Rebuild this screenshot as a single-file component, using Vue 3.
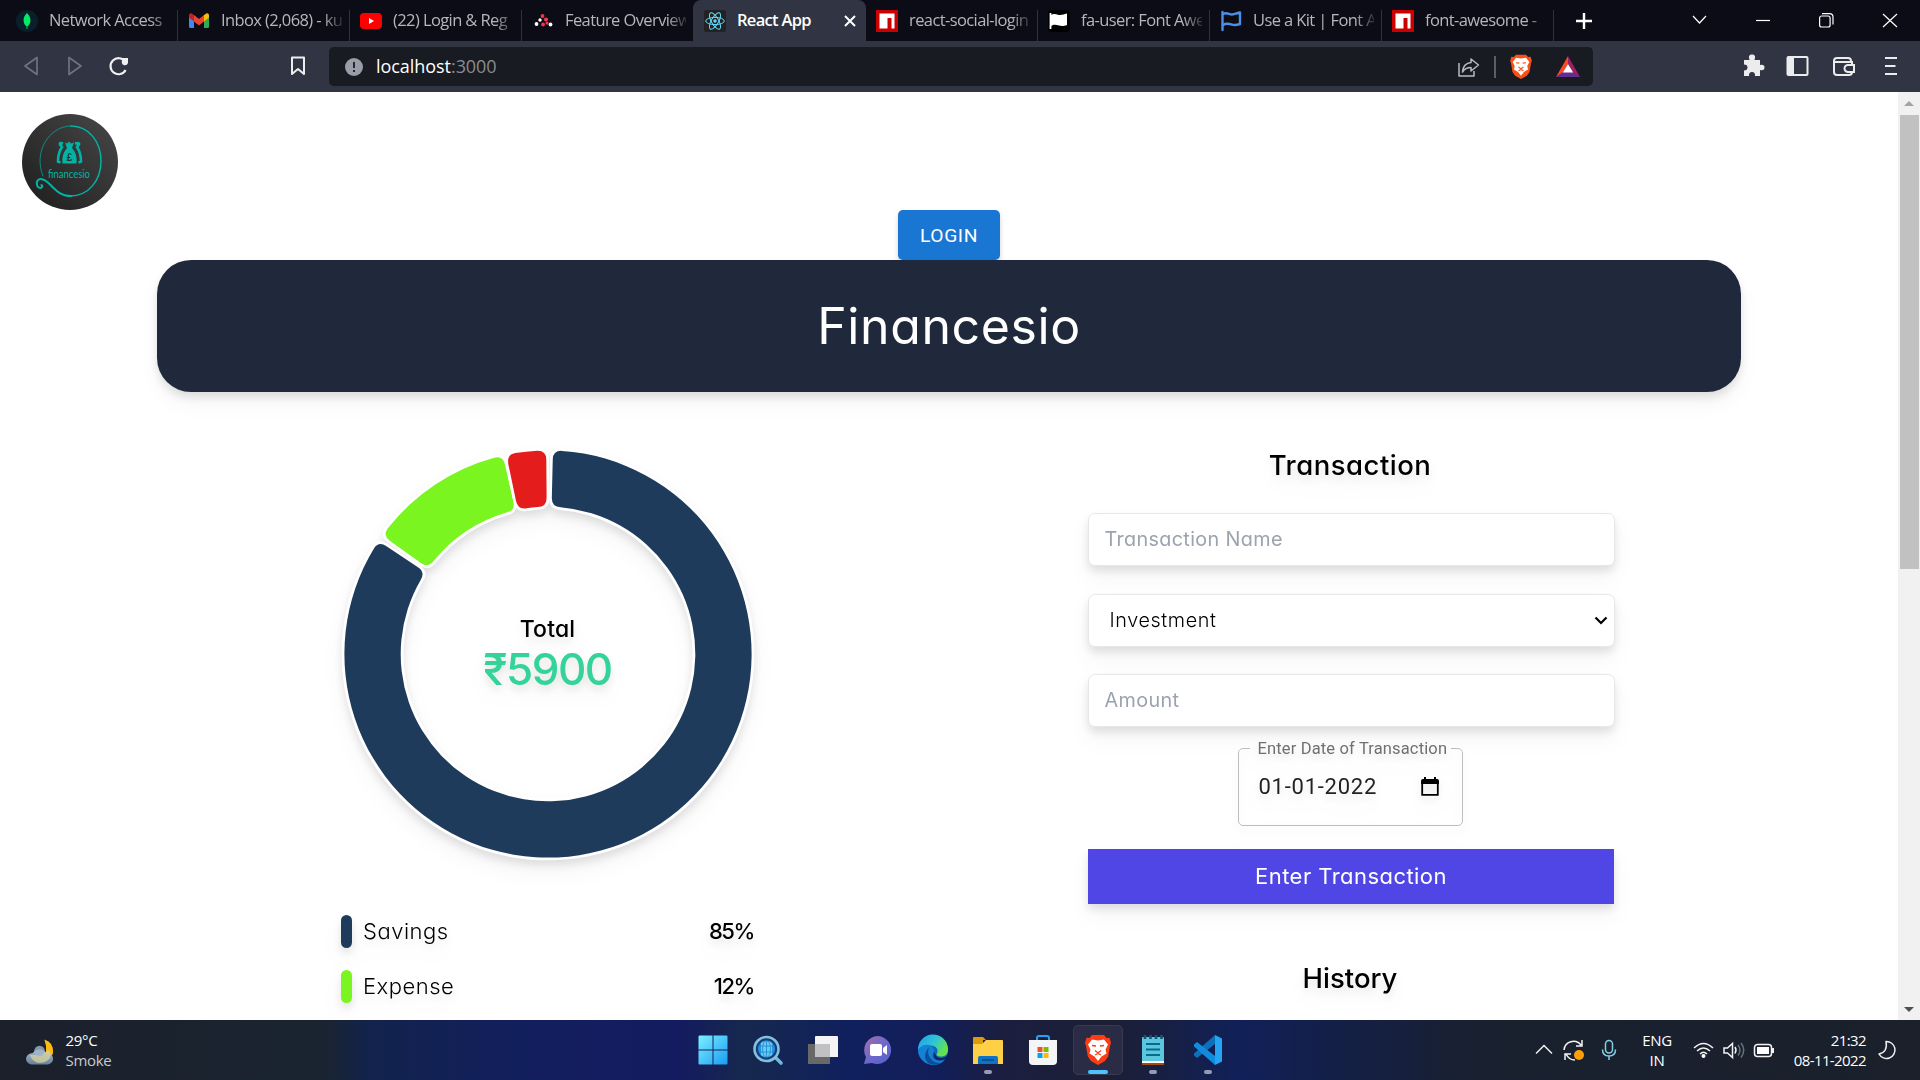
<script setup>
const tabs = [
  { id: 'mongo', title: 'Network Access' },
  { id: 'gmail', title: 'Inbox (2,068) - ku' },
  { id: 'youtube', title: '(22) Login & Reg' },
  { id: 'feature', title: 'Feature Overview' },
  { id: 'react', title: 'React App', active: true },
  { id: 'npm', title: 'react-social-login' },
  { id: 'flag', title: 'fa-user: Font Awe' },
  { id: 'kit', title: 'Use a Kit | Font A' },
  { id: 'npm', title: 'font-awesome -' },
]

const legend = [
  { label: 'Savings', value: '85%', color: '#1f3b5c' },
  { label: 'Expense', value: '12%', color: '#7af520' },
]

const CENTER = 220
const point = (radius, deg) => {
  const a = (deg * Math.PI) / 180
  return `${(CENTER + radius * Math.sin(a)).toFixed(2)} ${(CENTER - radius * Math.cos(a)).toFixed(2)}`
}

// Ring segment with rounded corners, angles clockwise from twelve o'clock
function segment(from, to) {
  const R = 203.6
  const r = 147.3
  const c = 9
  const o = (c / R) * (180 / Math.PI)
  const i = (c / r) * (180 / Math.PI)
  const large = to - from > 180 ? 1 : 0
  return [
    `M${point(R, from + o)}`,
    `A${R} ${R} 0 ${large} 1 ${point(R, to - o)}`,
    `Q${point(R, to)} ${point(R - c, to)}`,
    `L${point(r + c, to)}`,
    `Q${point(r, to)} ${point(r, to - i)}`,
    `A${r} ${r} 0 ${large} 0 ${point(r, from + i)}`,
    `Q${point(r, from)} ${point(r + c, from)}`,
    `L${point(R - c, from)}`,
    `Q${point(R, from)} ${point(R, from + o)}Z`,
  ].join('')
}

const segments = [
  { color: '#1f3b5c', d: segment(1.4, 303.7) },
  { color: '#7af520', d: segment(305.6, 347.2) },
  { color: '#e51c1c', d: segment(348.2, 359.5) },
]
</script>

<template>
  <div class="screen">
    <header class="tabbar">
      <div v-for="(tab, n) in tabs" :key="n" class="tab" :class="{ active: tab.active, edge: n === 3 }">
        <svg class="favicon" viewBox="0 0 22 22">
          <template v-if="tab.id === 'mongo'">
            <circle cx="11" cy="11" r="11" fill="#0a1f2b" />
            <path d="M11 3c2.600 2.500 3.600 5 3.400 8-.2 2.500-1.400 4.300-3 5.500V19h-.8v-2.500C9 15.300 7.800 13.500 7.600 11 7.400 8 8.400 5.500 11 3z" fill="#00ed64" />
          </template>
          <template v-else-if="tab.id === 'gmail'">
            <path d="M1 6v10.500q0 1.500 1.500 1.500H6V9.500z" fill="#4285f4" />
            <path d="M21 6v10.500q0 1.500-1.500 1.500H16V9.500z" fill="#34a853" />
            <path d="M16 5l2-1.300c1.600-1 3 .2 3 1.800v2L16 11.500z" fill="#fbbc04" />
            <path d="M6 5L4 3.700C2.400 2.700 1 3.900 1 5.500v2l5 4z" fill="#c5221f" />
            <path d="M6 5l5 4 5-4v6.500l-5 4-5-4z" fill="#ea4335" />
          </template>
          <template v-else-if="tab.id === 'youtube'">
            <rect x="0" y="3" width="22" height="16" rx="4" fill="#f00" />
            <path d="M9 8l5 3-5 3z" fill="#fff" />
          </template>
          <template v-else-if="tab.id === 'feature'">
            <g fill="#fff"><circle cx="4.500" cy="14" r="1.900" /><circle cx="8" cy="10" r="1.700" /><circle cx="18.500" cy="14.500" r="1.900" /></g>
            <g fill="#f0364f"><circle cx="10.500" cy="6" r="1.900" /><circle cx="14" cy="9.500" r="2.100" /><circle cx="11" cy="14.500" r="1.900" /><circle cx="15" cy="13" r="1.600" /></g>
          </template>
          <template v-else-if="tab.id === 'react'">
            <rect width="22" height="22" rx="2" fill="#222" />
            <g fill="none" stroke="#61dafb" stroke-width="1">
              <ellipse cx="11" cy="11" rx="9.300" ry="3.600" />
              <ellipse cx="11" cy="11" rx="9.300" ry="3.600" transform="rotate(60 11 11)" />
              <ellipse cx="11" cy="11" rx="9.300" ry="3.600" transform="rotate(120 11 11)" />
            </g>
            <circle cx="11" cy="11" r="1.700" fill="#61dafb" />
          </template>
          <template v-else-if="tab.id === 'npm'">
            <rect width="22" height="22" fill="#cb0000" />
            <path d="M3.500 3.500h15v15h-3V8H11.500v10.500h-8z" fill="#fff" />
          </template>
          <template v-else-if="tab.id === 'flag'">
            <rect width="22" height="22" rx="4" fill="#000" />
            <path d="M2.500 3v16" stroke="#fff" stroke-width="1.800" />
            <path d="M3 5c4-2.500 6 0 9 0s4-.8 7-1.500V15c-3 1-5 1.500-8 .6S6 14 3 16z" fill="#fff" />
          </template>
          <template v-else>
            <g fill="none" stroke="#4c8fe6" stroke-width="2.400" stroke-linecap="round" stroke-linejoin="round">
              <path d="M2.500 2v18" /><path d="M3 4c4-2 6 .5 9 .5S17 3 20 2.500V14c-3 1-5 1.500-8 .6S6 13 3 15" />
            </g>
          </template>
        </svg>
        <span class="tab-title">{{ tab.title }}</span>
        <svg v-if="tab.active" class="tab-close" viewBox="0 0 12 12"><path d="M1 1l10 10M11 1L1 11" stroke="#fff" stroke-width="2" /></svg>
      </div>
      <svg class="tab-plus" viewBox="0 0 16 16"><path d="M8 0v16M0 8h16" stroke="#fff" stroke-width="2.400" /></svg>
      <svg class="window-controls" viewBox="0 0 206 18" fill="none" stroke="#fff" stroke-width="1.200">
        <path d="M1 5l6.500 7L14 5" /><path d="M64 9.500h14" />
        <rect x="127.600" y="5" width="10.500" height="11" rx="2" /><path d="M130 2.600h7.500q3.500 0 3.500 3.500v7.500" />
        <path d="M191 3l14 13M205 3l-14 13" />
      </svg>
    </header>

    <nav class="toolbar">
      <svg class="nav-icons" viewBox="0 0 110 24" fill="none" stroke-width="1.700" stroke-linejoin="round">
        <path d="M14 3.500v17L2 12z" stroke="#6f7280" /><path d="M46 3.500v17L58 12z" stroke="#6f7280" />
        <path d="M102 7.500a8 8 0 1 0 .6 8.500" stroke="#f0f0f2" stroke-width="2.200" /><path d="M99 4h6v5q-1 3-4.500 2-2.500-1.500-1.500-5z" fill="#f0f0f2" />
      </svg>
      <svg class="bookmark" viewBox="0 0 16 20"><path d="M2 1.500h12V18l-6-5-6 5z" fill="none" stroke="#eee" stroke-width="2" stroke-linejoin="round" /></svg>
      <div class="address">
        <svg class="info" viewBox="0 0 18 18"><circle cx="9" cy="9" r="9" fill="#9a9da8" /><path d="M9 4v6M9 12v2" stroke="#181b22" stroke-width="1.800" /></svg>
        <span class="url">localhost<i>:3000</i></span>
        <svg class="share" viewBox="0 0 22 20" fill="none" stroke="#b9bac0" stroke-width="1.500" stroke-linejoin="round">
          <path d="M1 6v13h15v-5" /><path d="M13 2l7.500 6-7.500 6v-3.500c-4 0-6.500 1.300-8.500 4.500.5-5.500 3.500-9 8.500-9.500z" />
        </svg>
        <span class="divider"></span>
        <svg class="lion" viewBox="0 0 26 30">
          <path d="M7 1h12l2.500 2.500 3-.2L26 8l-1 3-1.800 10.500L20 26l-7 4-7-4-3.200-4.500L1 11 0 8l1.500-4.700 3 .2z" fill="#fb5014" />
          <path d="M7 4.500l6 1 6-1 4 5-2.500 5 1 4-5 3L13 26l-3.500-4.500-5-3 1-4L3 9.500z" fill="#fff" />
          <path d="M7 10.500l4 .5M19 10.500l-4 .5M10 15.500l3 2.500 3-2.500M10 20l3-1.500 3 1.500" fill="none" stroke="#fb5014" stroke-width="1.400" />
        </svg>
        <svg class="bat" viewBox="0 0 24 21">
          <path d="M12 0v8l-5 8.500L0 21z" fill="#ff4724" /><path d="M12 0v8l5 8.500 7 4.500z" fill="#9e1f63" />
          <path d="M0 21l7-5h10l7 5z" fill="#662d91" /><path d="M12 8l5.200 8.500H6.800z" fill="#fff" />
        </svg>
      </div>
      <svg class="tools" viewBox="0 0 156 24">
        <path d="M2 6h5.500q-2-5.500 2.500-5.500T12.500 6H18v5q4.500-1 4.500 2.500T18 16v6h-5q.3-4-3-4t-3 4H2v-5.500q3.500 0 3.500-3T2 10.500z" fill="#ececee" />
        <rect x="45.500" y="3" width="20" height="18" rx="1" fill="none" stroke="#ececee" stroke-width="2" /><path d="M46 3h6v18h-6z" fill="#ececee" />
        <g fill="none" stroke="#ececee" stroke-width="2"><path d="M109 9V7q0-3-3-3H95q-3 0-3 3v11q0 3 3 3h12q3 0 3-3V8H93" /><path d="M112 11h-6a3.500 3.500 0 0 0 0 7h6z" fill="#313442" /></g>
        <path d="M143 4h12M143 12h10.500M143 20h12" stroke="#ececee" stroke-width="2" />
      </svg>
    </nav>

    <main class="page">
      <div class="content">
        <svg class="logo" viewBox="0 0 96 96">
          <defs>
            <linearGradient id="disc" x1="0" y1="1" x2="1" y2="0"><stop offset="0" stop-color="#1d1d1d" /><stop offset="1" stop-color="#484848" /></linearGradient>
          </defs>
          <circle cx="48" cy="48" r="48" fill="url(#disc)" />
          <g fill="none" stroke="#00b3a4" stroke-linecap="round">
            <path d="M21 62C11 38 27 12 49 12" stroke-width=".7" /><path d="M49 12c18 0 30 16 30 35S67 82 48 82" stroke-width="1.500" />
            <path d="M49 82C32 82 28 65 19 65c-6 0-5 9-.5 9q3-1 1-3" stroke-width="2.100" />
          </g>
          <path d="M43 28.500l2 1 2-2 2 2 3-1-2 5.500q6 7 4.500 15.500H40.500Q39 41 45 34z" fill="#00b3a4" />
          <path d="M41 29.500q-4-1-3 1l2 2.500q-4 6-4 14.500l2.500 1M53 29.500q5-1 4 1l-2 2.500q4 6 4 14.500l-2.500 1" fill="none" stroke="#00b3a4" stroke-width="2.600" />
          <text x="47.500" y="46.500" text-anchor="middle" font-family="Liberation Sans" font-weight="700" font-size="10" fill="#293332">£</text>
          <text x="26" y="64" font-family="Lato" font-size="12" textLength="42" lengthAdjust="spacingAndGlyphs" fill="#00b3a4">financesio</text>
        </svg>
        <button class="login">LOGIN</button>
        <h1 class="banner">Financesio</h1>
        <div class="columns">
          <section class="summary">
            <div class="chart">
              <svg viewBox="0 0 440 440">
                <path v-for="s in segments" :key="s.color" :d="s.d" :fill="s.color" stroke="#fff" stroke-width="5.500" stroke-linejoin="round" paint-order="stroke" />
              </svg>
              <div class="total">
                <h3>Total</h3>
                <span>₹5900</span>
              </div>
            </div>
            <ul class="legend">
              <li v-for="item in legend" :key="item.label">
                <span class="swatch" :style="{ background: item.color }"></span>
                <span class="name">{{ item.label }}</span>
                <b>{{ item.value }}</b>
              </li>
            </ul>
          </section>

          <section class="form">
            <h2 class="heading">Transaction</h2>
            <div class="field placeholder name-field">Transaction Name</div>
            <div class="field select">
              <span>Investment</span>
              <svg viewBox="0 0 14 9"><path d="M1.500 1.500L7 7l5.500-5.500" fill="none" stroke="#000" stroke-width="2.200" /></svg>
            </div>
            <div class="field placeholder">Amount</div>
            <fieldset class="date">
              <legend>Enter Date of Transaction</legend>
              <div class="date-row">
                <span>01-01-2022</span>
                <svg viewBox="0 0 18 20"><path d="M1.200 5v12.800h15.600V5" fill="none" stroke="#000" stroke-width="1.800" /><path d="M2 2h1V0h2v2h8V0h2v2h1q2 0 2 2v3H0V4q0-2 2-2z" /></svg>
              </div>
            </fieldset>
            <button class="submit">Enter Transaction</button>
            <h2 class="heading history">History</h2>
          </section>
        </div>
      </div>
      <aside class="scrollbar">
        <i class="up"></i><span class="thumb"></span><i class="down"></i>
      </aside>
    </main>

    <footer class="taskbar">
      <div class="weather">
        <svg viewBox="0 0 30 27">
          <defs><linearGradient id="cloud" x2="0" y2="1"><stop stop-color="#a9bdd0" /><stop offset="1" stop-color="#66809a" /></linearGradient></defs>
          <path d="M19 0q10 3 9 14-2 8-12 8 8-8 3-22z" fill="#fdb913" />
          <path d="M7 26a7 6 0 0 1 0-12 8 7 0 0 1 14 0 6.500 6 0 0 1 1 12z" fill="url(#cloud)" />
          <path d="M4 16q13 1 19-5 4 4 2 8-4 6-13 5-6-2-8-8z" fill="#d9d3a0" opacity=".75" />
          <circle cx="14" cy="12" r="5.500" fill="#9fb4ca" opacity=".8" />
        </svg>
        <div class="weather-text"><span>29°C</span><span>Smoke</span></div>
      </div>

      <div class="apps">
        <div class="app"><svg viewBox="0 0 30 30">
          <defs><linearGradient id="win" x2="1" y2="1"><stop stop-color="#7cf0ff" /><stop offset="1" stop-color="#1a9bf5" /></linearGradient></defs>
          <path d="M.5 1.500q0-1 1-1H14.500v14H.5zM15.500.5h13q1 0 1 1v13h-14zM.5 15.500h14v14h-13q-1 0-1-1zM15.500 15.500h14v13q0 1-1 1h-13z" fill="url(#win)" />
        </svg></div>
        <div class="app"><svg viewBox="0 0 30 30">
          <path d="M22 22l6 6" stroke="#75b6dc" stroke-width="3.600" stroke-linecap="round" />
          <circle cx="13.500" cy="14" r="12" fill="#1b3d72" stroke="#84c0e0" stroke-width="2.600" /><circle cx="13.500" cy="14" r="8.500" fill="#2194e5" />
          <path d="M8 8q5.500-4 11 0v12q-5.500 4-11 0z" fill="#62cbf7" />
          <g fill="none" stroke="#1772bf" stroke-width=".6"><ellipse cx="13.500" cy="14" rx="4" ry="8.500" /><path d="M5.500 11h16M5.500 17h16M13.500 5.500v17" /></g>
        </svg></div>
        <div class="app"><svg viewBox="0 0 30 30"><path d="M0 9h22v20H0z" fill="#686868" /><path d="M7 2q0-1 1-1h21q1 0 1 1v20H7z" fill="#f4f4f4" /><path d="M7 9h15v13H7z" fill="#c1c1c3" /></svg></div>
        <div class="app"><svg viewBox="0 0 30 30">
          <defs><linearGradient id="chat" x2="1" y2="1"><stop stop-color="#a56ea8" /><stop offset=".5" stop-color="#6f68ca" /><stop offset="1" stop-color="#5361cf" /></linearGradient></defs>
          <path d="M15 1a14 14 0 1 1-6 27l-8 1 2-7A14 14 0 0 1 15 1z" fill="url(#chat)" /><rect x="7" y="9" width="12" height="12" rx="2" fill="#fff" /><path d="M20 13l4-3v10l-4-3z" fill="#fff" />
        </svg></div>
        <div class="app"><svg viewBox="0 0 30 30">
          <defs><linearGradient id="edgeTop" x2="1" y2=".5"><stop stop-color="#1d9ee8" /><stop offset=".55" stop-color="#2dc4d8" /><stop offset="1" stop-color="#66e34a" /></linearGradient></defs>
          <circle cx="15" cy="15" r="15" fill="#0c69c0" />
          <path d="M0 15A15 15 0 0 1 30 14c.5 5-3 7.500-7 7.500-3 0-5.500-1-4-3 2-4-1-8-6.500-8C7 10.500 2 12 0 15z" fill="url(#edgeTop)" />
          <path d="M0 15c2-4 7-6 11-5 5 1 6 6 4 8-3 7 4 10 12 6-3 5-9 6.500-14 5.700C6 28 0 22 0 15z" fill="#1481d4" />
          <path d="M11 12q-3 8 4 14 3 2.500 8 1.500-6 4-12 1-8-6 0-16.500z" fill="#0b4f9a" />
          <path d="M30 20q-5 5-11 2l-3-5q-2 8 6 8.500 5 0 8-5.500z" fill="#14245a" />
        </svg></div>
        <div class="app open"><svg viewBox="0 0 30 30"><path d="M0 3q0-1 1-1h9l3 3h-3v6H0z" fill="#dc9b08" /><path d="M0 9h9l4-4h16q1 0 1 1v23H0z" fill="#ffcf45" /><path d="M5 29v-6q0-2 2-2h16q2 0 2 2v6z" fill="#0f72c4" /><path d="M9 25h12" stroke="#064a8c" stroke-width="1.500" /></svg></div>
        <div class="app"><svg viewBox="0 0 30 30"><path d="M9 7V3q0-2 2-2h8q2 0 2 2v4" fill="none" stroke="#21a4f3" stroke-width="2" /><path d="M1 5h28v21q0 4-4 4H5q-4 0-4-4z" fill="#f4f5f6" /><path d="M9.500 12h5v5h-5z" fill="#f25022" /><path d="M15.500 12h5v5h-5z" fill="#7fba00" /><path d="M9.500 18h5v5h-5z" fill="#00a4ef" /><path d="M15.500 18h5v5h-5z" fill="#ffb900" /></svg></div>
        <div class="app open current"><svg viewBox="-2 0 30 30">
          <path d="M7 0h12l2.500 3 3-.2L26 8l-1 3-1.800 10.500L20 26l-7 4-7-4-3.200-4.500L1 11 0 8l1.500-5.200 3 .2z" fill="#fb3c14" />
          <path d="M7 4.500l6 1 6-1 4 5-2.500 5 1 4-5 3L13 26l-3.500-4.500-5-3 1-4L3 9.500z" fill="#fff" />
          <path d="M7 10.500l4 .5M19 10.500l-4 .5M10 15.500l3 2.500 3-2.500M10 20l3-1.500 3 1.500" fill="none" stroke="#fb3c14" stroke-width="1.300" />
        </svg></div>
        <div class="app open"><svg viewBox="0 0 30 30"><path d="M4 3q0-1 1-1h20q1 0 1 1v25H4z" fill="#5cc6de" /><path d="M4 26h22v2H4z" fill="#fff" /><path d="M4 28h22v2H4z" fill="#a14d12" /><path d="M8 9h14M8 14.500h14M8 20h14" stroke="#076c8c" stroke-width="2" /><path d="M7 0v4M12.500 0v4M18 0v4M23.500 0v4" stroke="#0e5874" stroke-width="2.600" /></svg></div>
        <div class="app open"><svg viewBox="0 0 30 30"><path d="M22 0l7 3.500v23L22 30z" fill="#24a4f2" /><path d="M22 0v9L4 23l-3-2.500v-2z" fill="#0b70bd" /><path d="M22 30v-9L4 7 1 9.500v2z" fill="#138bdc" /></svg></div>
      </div>

      <div class="tray">
        <svg class="tray-left" viewBox="0 0 82 22" fill="none" stroke="#f2f2f2" stroke-width="1.500">
          <path d="M1 14.500L9 6.500l8 8" /><path d="M29 11a9.500 9.500 0 0 1 17-5M47 1v6h-6M40 21q-6 0-9-6M30 21v-6h6" />
          <circle cx="44" cy="16" r="5" fill="#ff9d0a" stroke="none" />
          <g stroke="#83cfe4"><rect x="70.500" y="1.500" width="7" height="12.500" rx="3.500" /><path d="M67.500 10.500q0 6.500 6.500 6.500t6.500-6.500M74 17v4" /></g>
        </svg>
        <div class="lang"><span>ENG</span><span>IN</span></div>
        <svg class="tray-right" viewBox="0 0 82 18" fill="none" stroke="#f2f2f2" stroke-width="1.500">
          <path d="M1 7q9.500-9 19 0M4 10q6.500-6 13 0M7 13q3.500-3.500 7 0" /><circle cx="10.500" cy="15" r="2" fill="#fff" stroke="none" />
          <path d="M31 7h3.500l5-4.500v14l-5-4.500H31zM42 6q2 3 0 6.500" /><path d="M45 4q4 5 0 10.500M48 2q5.500 7 0 14.500" stroke="#6a707b" />
          <rect x="61.500" y="3.500" width="17" height="12" rx="3" /><rect x="64" y="6" width="12" height="7" fill="#fff" stroke="none" /><path d="M80 7v5" stroke-width="2" />
        </svg>
        <div class="clock"><span>21:32</span><span>08-11-2022</span></div>
        <svg class="moon" viewBox="0 0 18 20"><path d="M8 1.500a8.500 8.500 0 1 1-7 12.500Q10 12 8 1.500z" fill="none" stroke="#eee" stroke-width="1.500" stroke-linejoin="round" /></svg>
      </div>
    </footer>
  </div>
</template>

<style>
html, body { margin: 0; overflow: hidden; }
</style>

<style scoped>
* { box-sizing: border-box; }
.screen { width: 1920px; height: 1080px; display: flex; flex-direction: column; overflow: hidden; background: #fff; font-family: "Open Sans", "Noto Sans", sans-serif; }
svg { display: block; flex: none; overflow: visible; }
h1, h2, h3, ul { margin: 0; padding: 0; font-weight: 400; }
button { border: 0; padding: 0; }

.tabbar { height: 41px; flex: none; display: flex; align-items: center; background: #0c0c16; padding-left: 6px; }
.tab { position: relative; width: 172px; height: 41px; flex: none; display: flex; align-items: center; padding: 0 8px 0 10px; color: #b6b6bb; font-size: 16.500px; }
.tab::after { content: ""; position: absolute; right: 0; bottom: 0; width: 1.500px; height: 31px; background: #33332f; }
.tab.active::after, .tab.edge::after { display: none; }
.tab.active { background: #313442; border-radius: 8px 8px 0 0; color: #fff; font-weight: 600; width: 173px; margin: 0 0 0 -1px; padding: 0 10px 0 11px; }
.favicon { width: 22px; height: 22px; }
.tab-title { margin-left: 11px; flex: 1; min-width: 0; white-space: nowrap; letter-spacing: -.6px; line-height: 22px; padding-bottom: 1px; mask-image: linear-gradient(90deg, #000 84%, rgba(0, 0, 0, .2)); }
.active .tab-title { mask-image: none; letter-spacing: -.7px; }
.tab-close { width: 12px; height: 12px; }
.tab-plus { width: 16px; height: 16px; margin-left: 22px; }
.window-controls { width: 206px; height: 18px; margin: 0 0 2px 100px; }

.toolbar { height: 51px; flex: none; display: flex; align-items: center; background: #313442; padding-left: 22px; }
.nav-icons { width: 110px; height: 24px; margin: 0 -1px 1px 1px; }
.bookmark { width: 16px; height: 20px; margin: 0 0 1px 158px; }
.address { width: 1264px; height: 39px; margin-left: 23px; border-radius: 5px; background: #181b22; display: flex; align-items: center; padding-left: 16px; }
.info { width: 18px; height: 18px; }
.url { width: 1082px; margin-left: 13px; color: #fff; font-size: 18px; letter-spacing: -.05px; line-height: 24px; padding-bottom: 2px; }
.url i { font-style: normal; color: #8a8b90; }
.share { width: 22px; height: 20px; }
.divider { width: 2px; height: 22px; background: #5b5e67; margin-left: 14px; }
.lion { width: 22px; height: 25px; margin-left: 14px; }
.bat { width: 24px; height: 21px; margin-left: 24px; }
.tools { width: 156px; height: 24px; margin: 0 0 1px 149px; }

.page { height: 928px; flex: none; display: flex; overflow: hidden; }
.content { width: 1898px; display: flex; flex-direction: column; align-items: center; font-family: Inter, sans-serif; font-feature-settings: "cv11", "ss03"; }
.logo { width: 96px; height: 96px; margin: 22px auto 0 22px; }
.login { width: 102px; height: 50px; flex: none; border-radius: 5px; background: #1976d2; color: #fff; font: 450 19.250px Roboto, sans-serif; letter-spacing: .6px; box-shadow: 0 3px 5px rgba(0, 0, 0, .18); }
.banner { position: relative; width: 1584px; height: 132px; flex: none; border-radius: 34px; background: #1f293b; color: #fff; font-size: 50px; font-weight: 430; line-height: 133px; text-align: center; letter-spacing: .6px; filter: drop-shadow(0 12px 9px rgba(0, 0, 0, .04)) drop-shadow(0 5px 4px rgba(0, 0, 0, .1)); }
.columns { width: 1584px; display: flex; align-items: flex-start; filter: drop-shadow(0 12px 10px rgba(0, 0, 0, .04)) drop-shadow(0 5px 4px rgba(0, 0, 0, .1)); }

.summary { width: 413px; margin-left: 184px; padding-top: 41.500px; }
.chart { display: grid; width: 440px; height: 440px; margin-left: -13.500px; }
.chart > * { grid-area: 1 / 1; }
.chart svg { width: 440px; height: 440px; }
.total { display: flex; flex-direction: column; align-items: center; padding-top: 181.500px; }
.total h3 { font-size: 23px; line-height: 28px; font-weight: 500; letter-spacing: .2px; }
.total span { font-size: 44px; line-height: 53px; font-weight: 550; letter-spacing: -1.500px; color: #34d399; }
.legend { list-style: none; padding-top: 41.500px; }
.legend li { height: 33px; margin-bottom: 22px; display: flex; align-items: center; font-size: 22px; line-height: 31px; font-weight: 300; }
.swatch { width: 11px; height: 33px; border-radius: 6px; }
.name { margin: 0 0 0 11px; flex: 1; letter-spacing: .5px; }
.legend b { font-weight: 550; letter-spacing: -1.400px; }

.form { width: 526px; margin-left: 334px; display: flex; flex-direction: column; align-items: center; padding-top: 55px; }
.heading { font-size: 27.500px; line-height: 36px; font-weight: 550; letter-spacing: .5px; margin-left: -2px; }
.field { width: 527px; height: 53px; margin-top: 27.500px; border: 1px solid #e5e7eb; border-radius: 7px; background: #fff; display: flex; align-items: center; padding: 0 16px 2px; font-size: 19.800px; letter-spacing: .35px; }
.name-field { margin-top: 30px; }
.placeholder { color: #9ca3af; }
.select { padding: 0 6px 0 21px; justify-content: space-between; font-weight: 300; letter-spacing: .6px; }
.select svg { width: 14px; height: 9px; }
.date { width: 225px; height: 87px; margin: 12px 2px 0 0; padding: 0 9px 0 11px; border: 1px solid #bdbdbd; border-radius: 5px; font-family: Roboto, sans-serif; color: #222; }
.date legend { padding: 0 4px 0 8px; font-size: 16.500px; line-height: 19px; white-space: nowrap; color: #707070; letter-spacing: .15px; }
.date-row { display: flex; justify-content: space-between; align-items: center; padding: 0 14px 0 9px; margin-top: 15px; font-size: 22px; line-height: 28px; letter-spacing: .75px; }
.date-row svg { width: 18px; height: 20px; }
.submit { width: 526px; height: 55px; margin-top: 23px; background: #4f46e5; color: #fff; font: 400 22px/55px Inter, sans-serif; font-feature-settings: inherit; letter-spacing: .45px; }
.history { margin-top: 56px; letter-spacing: 0; }

.scrollbar { width: 22px; background: #f1f1f1; display: flex; flex-direction: column; align-items: center; }
.scrollbar i { border: 5.500px solid transparent; width: 0; height: 0; }
.up { margin-top: 4px; border-bottom-color: #a3a3a3 !important; }
.thumb { width: 19px; height: 454px; margin-top: 9px; background: #c1c1c1; }
.down { margin-top: auto; border-top-color: #505050 !important; margin-bottom: 3px; }

.taskbar { height: 60px; flex: none; display: flex; align-items: center; color: #fff; font-size: 15px; background: linear-gradient(90deg, #1b202b 0, #1a2431 325px, #12234c 370px, #121f5e 520px, #141b60 680px, #16284e 745px, #10205e 850px, #121e58 940px, #1b1e40 1000px, #1c1f34 1110px, #102058 1240px, #141f48 1330px, #19202f 1480px, #1b202b 1920px); }
.weather { width: 685px; display: flex; align-items: center; padding-left: 26px; }
.weather svg { width: 29px; height: 27px; margin-top: 4px; }
.weather-text, .lang, .clock { display: flex; flex-direction: column; line-height: 20px; }
.weather-text { margin-left: 10.500px; letter-spacing: -.3px; }
.weather-text span + span { color: #c9cbce; }
.apps { display: flex; }
.app { position: relative; width: 55px; height: 50px; display: flex; justify-content: center; padding-top: 10px; }
.app svg { position: relative; width: 30px; height: 30px; }
.open::after { content: ""; position: absolute; left: 23.500px; bottom: 1px; width: 8px; height: 4px; border-radius: 2px; background: #959bb4; }
.current::before { content: ""; position: absolute; inset: 0 2.500px; border: 1px solid #383a52; border-radius: 5px; background: #2a2c45; }
.current::after { left: 17.500px; width: 20px; background: #4cc2ff; }
.tray { margin-left: 300px; display: flex; align-items: center; }
.tray-left { width: 82px; height: 22px; }
.lang { width: 30px; margin-left: 25px; align-items: center; letter-spacing: -.3px; }
.tray-right { width: 82px; height: 18px; margin-left: 21px; }
.clock { width: 80px; margin-left: 11px; align-items: flex-end; letter-spacing: -.6px; white-space: nowrap; }
.moon { width: 18px; height: 20px; margin-left: 12px; }
</style>
